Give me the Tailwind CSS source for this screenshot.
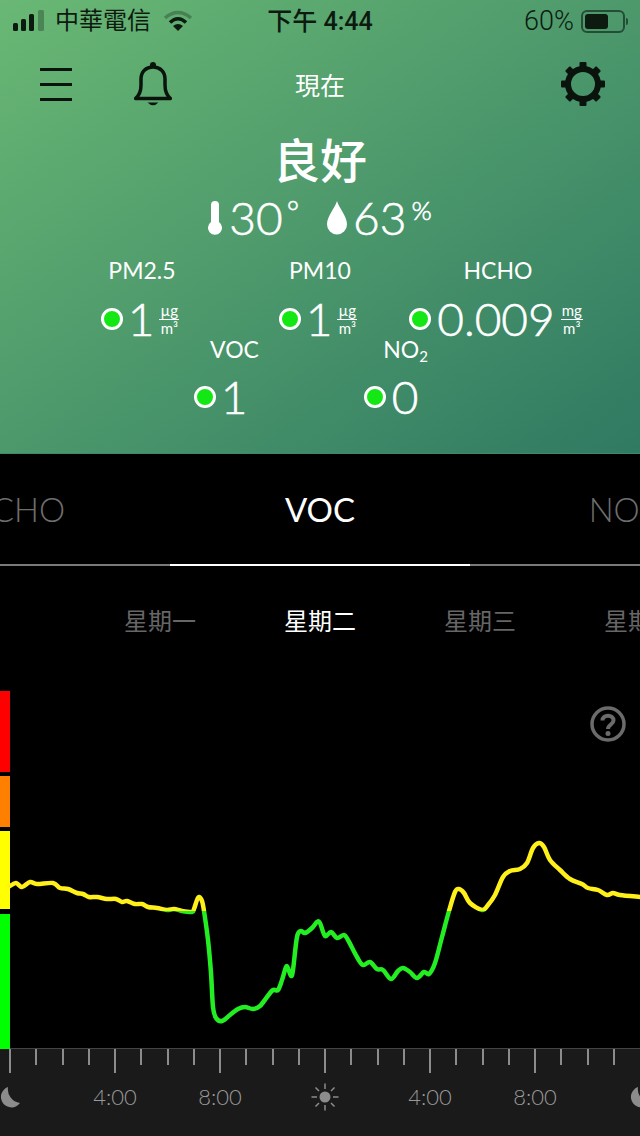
<!DOCTYPE html>
<html lang="zh-Hant">
<head>
  <meta charset="UTF-8" />
  <meta name="viewport" content="width=device-width, initial-scale=1.0">
  <title>VOC</title>
  <script src="https://cdn.jsdelivr.net/npm/@tailwindcss/browser@4"></script>
</head>
<body class="bg-black font-['Lato','Noto_Sans_CJK_TC',sans-serif]">
  <div class="w-[640px] h-[1136px] overflow-hidden flex flex-col">

    <!-- top panel -->
    <header class="h-[454px] shrink-0 bg-gradient-to-br from-[#6ab874] to-[#2f7a62] text-white border-b border-[#3d8a68]">
      <!-- status bar -->
      <div class="h-[42px] grid grid-cols-3 items-center text-[#0c1a10] font-['Roboto','Noto_Sans_CJK_TC',sans-serif] text-[24px]">
        <div class="flex items-center pl-[13px]">
          <svg width="33" height="24" viewBox="0 0 33 24" fill="currentColor">
            <rect x="0" y="14" width="5" height="8" rx="1.5"/>
            <rect x="8" y="10" width="5" height="12" rx="1.5"/>
            <rect x="16" y="5" width="5" height="17" rx="1.5"/>
            <rect x="25" y="1" width="6" height="21" rx="1.5" opacity=".3"/>
          </svg>
          <span class="ml-[9px] whitespace-nowrap leading-none">中華電信</span>
          <svg class="ml-[12px] shrink-0" width="30" height="24" viewBox="0 0 30 24" fill="none" stroke="currentColor" stroke-width="3.5">
            <path d="M2 9Q15 -2 28 9" opacity=".3"/>
            <path d="M7 13.5Q15 6 23 13.5"/>
            <path d="M15 22l-5-5q5-4 10 0z" fill="currentColor" stroke="none"/>
          </svg>
        </div>
        <div class="text-center text-[25px] font-medium whitespace-nowrap leading-none">下午 4:44</div>
        <div class="flex items-center justify-end pr-[15px]">
          <span class="mr-[7px] text-[27px] font-light leading-none">60%</span>
          <div class="relative w-[44px] h-[23px] rounded-[6px] border-2 border-[#0c1a10]/60 p-[2px]">
            <div class="w-[23px] h-full bg-[#0c1a10] rounded-[3px]"></div>
            <div class="absolute right-[-5px] top-[6px] w-[2px] h-[7px] bg-[#0c1a10]/60 rounded-r"></div>
          </div>
        </div>
      </div>

      <!-- nav row -->
      <div class="mt-[20px] h-[44px] grid grid-cols-3 items-center">
        <div class="flex items-center pl-[40px] gap-[62px]">
          <div class="w-[32px] flex flex-col gap-[12px]">
            <div class="h-[3px] bg-[#0a140c]"></div>
            <div class="h-[3px] bg-[#0a140c]"></div>
            <div class="h-[3px] bg-[#0a140c]"></div>
          </div>
          <svg width="38" height="44" viewBox="0 0 38 44" fill="none" stroke="#0a140c" stroke-width="3.5">
            <circle cx="19" cy="3" r="3" fill="#0a140c" stroke="none"/>
            <path d="M1.5 36.5Q7 32 7 23V17C7 9.5 12 5 19 5S31 9.5 31 17V23Q31 32 36.5 36.5Z" stroke-linejoin="round"/>
            <path d="M13.5 40.5H24.5Q19 46 13.5 40.5Z" fill="#0a140c" stroke="none"/>
          </svg>
        </div>
        <div class="text-center text-[25px] leading-none font-['Noto_Sans_CJK_TC',sans-serif] font-normal">現在</div>
        <div class="flex justify-end pr-[35px]">
          <svg width="44" height="44" viewBox="-22 -22 44 44" fill="#0a140c">
            <circle r="15" fill="none" stroke="#0a140c" stroke-width="6"/>
            <rect x="-3.5" y="-22" width="7" height="7" rx="1"/>
            <rect x="-3.5" y="-22" width="7" height="7" rx="1" transform="rotate(45)"/>
            <rect x="-3.5" y="-22" width="7" height="7" rx="1" transform="rotate(90)"/>
            <rect x="-3.5" y="-22" width="7" height="7" rx="1" transform="rotate(135)"/>
            <rect x="-3.5" y="-22" width="7" height="7" rx="1" transform="rotate(180)"/>
            <rect x="-3.5" y="-22" width="7" height="7" rx="1" transform="rotate(225)"/>
            <rect x="-3.5" y="-22" width="7" height="7" rx="1" transform="rotate(270)"/>
            <rect x="-3.5" y="-22" width="7" height="7" rx="1" transform="rotate(315)"/>
          </svg>
        </div>
      </div>

      <!-- status -->
      <div class="mt-[21px] h-[60px] flex items-center justify-center text-[47px] leading-none font-['Noto_Sans_CJK_TC',sans-serif] font-medium">良好</div>

      <!-- temperature / humidity -->
      <div class="mt-[9px] h-[44px] flex items-center justify-center text-[46px] leading-none font-light [-webkit-text-stroke:0.6px_white]">
        <svg width="14" height="34" viewBox="0 0 14 34" fill="#fff">
          <path d="M3 21V4a4 4 0 0 1 8 0V21a7 7 0 1 1-8 0Z"/>
        </svg>
        <span class="ml-[7px]">30</span>
        <span class="ml-[4px] mb-[16px] text-[30px]">°</span>
        <svg class="ml-[28px]" width="20" height="34" viewBox="0 0 20 34" fill="#fff">
          <path d="M10 0C12 7 20 15 20 23.5A10 10 0 0 1 0 23.5C0 15 8 7 10 0Z"/>
        </svg>
        <span class="ml-[6px]">63</span>
        <span class="ml-[5px] mb-[16px] text-[26px]">%</span>
      </div>

      <!-- metrics, first row -->
      <div class="mt-[18px] flex justify-center">
        <div class="w-[178px] flex flex-col items-center">
          <div class="h-[24px] text-[23px] leading-[24px]">PM2.5</div>
          <div class="mt-[14px] h-[46px] flex items-center pr-[4px]">
            <div class="w-[22px] h-[22px] rounded-full bg-[#14e814] border-[3px] border-white"></div>
            <span class="ml-[5px] text-[46px] leading-none font-light [-webkit-text-stroke:0.6px_white]">1</span>
            <div class="ml-[5px] w-[20px] flex flex-col items-center text-[15px] leading-[14px]"><span class="border-b border-white w-full text-center pb-[2px]">µg</span><span class="pt-[1px]">m³</span></div>
          </div>
        </div>
        <div class="w-[178px] flex flex-col items-center">
          <div class="h-[24px] text-[23px] leading-[24px]">PM10</div>
          <div class="mt-[14px] h-[46px] flex items-center pr-[4px]">
            <div class="w-[22px] h-[22px] rounded-full bg-[#14e814] border-[3px] border-white"></div>
            <span class="ml-[5px] text-[46px] leading-none font-light [-webkit-text-stroke:0.6px_white]">1</span>
            <div class="ml-[5px] w-[20px] flex flex-col items-center text-[15px] leading-[14px]"><span class="border-b border-white w-full text-center pb-[2px]">µg</span><span class="pt-[1px]">m³</span></div>
          </div>
        </div>
        <div class="w-[178px] flex flex-col items-center">
          <div class="h-[24px] text-[23px] leading-[24px]">HCHO</div>
          <div class="mt-[14px] h-[46px] flex items-center pr-[4px]">
            <div class="w-[22px] h-[22px] rounded-full bg-[#14e814] border-[3px] border-white"></div>
            <span class="ml-[6px] text-[46px] leading-none font-light [-webkit-text-stroke:0.6px_white]">0.009</span>
            <div class="ml-[6px] w-[22px] flex flex-col items-center text-[15px] leading-[14px]"><span class="border-b border-white w-full text-center pb-[2px]">mg</span><span class="pt-[1px]">m³</span></div>
          </div>
        </div>
      </div>

      <!-- metrics, second row -->
      <div class="-mt-[5px] flex justify-center">
        <div class="w-[171px] flex flex-col items-center">
          <div class="h-[24px] text-[23px] leading-[24px]">VOC</div>
          <div class="mt-[13px] h-[46px] flex items-center pr-[28px]">
            <div class="w-[22px] h-[22px] rounded-full bg-[#14e814] border-[3px] border-white"></div>
            <span class="ml-[5px] text-[46px] leading-none font-light [-webkit-text-stroke:0.6px_white]">1</span>
          </div>
        </div>
        <div class="w-[171px] flex flex-col items-center">
          <div class="h-[24px] text-[23px] leading-[24px]">NO<sub class="text-[15px]">2</sub></div>
          <div class="mt-[13px] h-[46px] flex items-center pr-[29px]">
            <div class="w-[22px] h-[22px] rounded-full bg-[#14e814] border-[3px] border-white"></div>
            <span class="ml-[6px] text-[46px] leading-none font-light [-webkit-text-stroke:0.6px_white]">0</span>
          </div>
        </div>
      </div>
    </header>

    <!-- pollutant tabs -->
    <nav class="h-[112px] shrink-0 flex justify-center overflow-hidden text-[33px]">
      <div class="w-[300px] shrink-0 pt-[2px] pr-[8px] flex items-center justify-center border-b-2 border-[#7a7a7a] text-[#6e6e6e] font-light">HCHO</div>
      <div class="w-[300px] shrink-0 pt-[2px] flex items-center justify-center border-b-2 border-white text-white">VOC</div>
      <div class="w-[300px] shrink-0 pt-[2px] pl-[4px] flex items-center justify-center border-b-2 border-[#7a7a7a] text-[#6e6e6e] font-light">NO<sub class="ml-[4px] text-[20px]">2</sub></div>
    </nav>

    <!-- days -->
    <div class="h-[112px] shrink-0 pb-[4px] pl-[80px] flex overflow-hidden text-[24px] font-normal text-[#666] font-['Noto_Sans_CJK_TC',sans-serif]">
      <div class="w-[160px] shrink-0 flex items-center justify-center">星期一</div>
      <div class="w-[160px] shrink-0 flex items-center justify-center text-white">星期二</div>
      <div class="w-[160px] shrink-0 flex items-center justify-center">星期三</div>
      <div class="w-[160px] shrink-0 flex items-center justify-center">星期四</div>
    </div>

    <!-- chart -->
    <div class="relative h-[370px] shrink-0">
      <div class="w-[10px] pt-[13px] flex flex-col">
        <div class="h-[81px] bg-[#ff0000]"></div>
        <div class="mt-[4px] h-[51px] bg-[#ff8000]"></div>
        <div class="mt-[4px] h-[78px] bg-[#ffff00]"></div>
        <div class="mt-[5px] h-[135px] bg-[#00ff00]"></div>
      </div>
      <svg class="absolute inset-0" width="640" height="370" viewBox="0 678 640 370" fill="none">
        <defs>
          <linearGradient id="level" gradientUnits="userSpaceOnUse" x1="0" y1="678" x2="0" y2="1048">
            <stop offset="0.631" stop-color="#fff01a"/>
            <stop offset="0.631" stop-color="#22ee22"/>
          </linearGradient>
        </defs>
        <path id="voc-line" stroke="url(#level)" stroke-width="4.5" stroke-linejoin="round" stroke-linecap="round"/>
      </svg>
      <svg class="absolute right-[14px] top-[28px]" width="36" height="36" viewBox="0 0 36 36" fill="none">
        <circle cx="18" cy="18" r="16" stroke="#6b6b6b" stroke-width="3.5"/>
        <path d="M12.5 14.5C12.5 8 23.5 8 23.5 14.5C23.5 18.5 18 18.5 18 23" stroke="#6b6b6b" stroke-width="4"/>
        <circle cx="18" cy="27.5" r="2.5" fill="#6b6b6b"/>
      </svg>
    </div>

    <!-- time axis -->
    <footer class="flex-1 bg-[#1a1a1a] border-t border-[#444]">
      <div class="flex pl-[9px] items-start">
        <div class="w-[26.25px] shrink-0 h-[24px] border-l-2 border-[#8c8c8c]"></div><div class="w-[26.25px] shrink-0 h-[16px] border-l-2 border-[#8c8c8c]"></div><div class="w-[26.25px] shrink-0 h-[16px] border-l-2 border-[#8c8c8c]"></div><div class="w-[26.25px] shrink-0 h-[16px] border-l-2 border-[#8c8c8c]"></div>
        <div class="w-[26.25px] shrink-0 h-[24px] border-l-2 border-[#8c8c8c]"></div><div class="w-[26.25px] shrink-0 h-[16px] border-l-2 border-[#8c8c8c]"></div><div class="w-[26.25px] shrink-0 h-[16px] border-l-2 border-[#8c8c8c]"></div><div class="w-[26.25px] shrink-0 h-[16px] border-l-2 border-[#8c8c8c]"></div>
        <div class="w-[26.25px] shrink-0 h-[24px] border-l-2 border-[#8c8c8c]"></div><div class="w-[26.25px] shrink-0 h-[16px] border-l-2 border-[#8c8c8c]"></div><div class="w-[26.25px] shrink-0 h-[16px] border-l-2 border-[#8c8c8c]"></div><div class="w-[26.25px] shrink-0 h-[16px] border-l-2 border-[#8c8c8c]"></div>
        <div class="w-[26.25px] shrink-0 h-[24px] border-l-2 border-[#8c8c8c]"></div><div class="w-[26.25px] shrink-0 h-[16px] border-l-2 border-[#8c8c8c]"></div><div class="w-[26.25px] shrink-0 h-[16px] border-l-2 border-[#8c8c8c]"></div><div class="w-[26.25px] shrink-0 h-[16px] border-l-2 border-[#8c8c8c]"></div>
        <div class="w-[26.25px] shrink-0 h-[24px] border-l-2 border-[#8c8c8c]"></div><div class="w-[26.25px] shrink-0 h-[16px] border-l-2 border-[#8c8c8c]"></div><div class="w-[26.25px] shrink-0 h-[16px] border-l-2 border-[#8c8c8c]"></div><div class="w-[26.25px] shrink-0 h-[16px] border-l-2 border-[#8c8c8c]"></div>
        <div class="w-[26.25px] shrink-0 h-[24px] border-l-2 border-[#8c8c8c]"></div><div class="w-[26.25px] shrink-0 h-[16px] border-l-2 border-[#8c8c8c]"></div><div class="w-[26.25px] shrink-0 h-[16px] border-l-2 border-[#8c8c8c]"></div><div class="w-[26.25px] shrink-0 h-[16px] border-l-2 border-[#8c8c8c]"></div>
      </div>
      <div class="mt-[12px] -ml-[42.5px] flex text-[22px] leading-none font-light text-[#999]">
        <div class="w-[105px] h-[24px] shrink-0 flex items-center justify-center">
          <svg width="20" height="21" viewBox="0 0 20 21" fill="#8c8c8c"><path d="M8 0A10.5 10.5 0 1 0 20 16A14 14 0 0 1 8 0Z"/></svg>
        </div>
        <div class="w-[105px] h-[24px] shrink-0 flex items-center justify-center">4:00</div>
        <div class="w-[105px] h-[24px] shrink-0 flex items-center justify-center">8:00</div>
        <div class="w-[105px] h-[24px] shrink-0 flex items-center justify-center">
          <svg width="28" height="28" viewBox="-14 -14 28 28" stroke="#8c8c8c" stroke-width="1.5" fill="#8c8c8c">
            <circle r="5.5" stroke="none"/>
            <path d="M0-13.5V-8M0 8V13.5M-13.5 0H-8M8 0H13.5M-9.5-9.5L-6-6M6 6L9.5 9.5M9.5-9.5L6-6M-6 6L-9.5 9.5"/>
          </svg>
        </div>
        <div class="w-[105px] h-[24px] shrink-0 flex items-center justify-center">4:00</div>
        <div class="w-[105px] h-[24px] shrink-0 flex items-center justify-center">8:00</div>
        <div class="w-[105px] h-[24px] shrink-0 flex items-center justify-center">
          <svg width="20" height="21" viewBox="0 0 20 21" fill="#8c8c8c"><path d="M8 0A10.5 10.5 0 1 0 20 16A14 14 0 0 1 8 0Z"/></svg>
        </div>
      </div>
    </footer>
  </div>

  <script>
    // VOC readings traced across the day, smoothed with a Catmull-Rom spline
    const pts = [[10,886],[16,883],[22,887],[30,882],[37,884],[53,883],[60,888],[68,889],[77,893],[83,894],[89,897],[97,897],[107,899],[116,899],[122,902],[127,901],[135,904],[142,904],[148,907],[157,908],[167,910],[174,909],[182,911],[192,912],[194,909],[197,900],[199,897],[202,901],[204,911],[208,940],[211,973],[213,1007],[216,1018],[222,1021],[230,1015],[238,1009],[245,1007],[253,1009],[260,1006],[267,997],[273,990],[278,990],[282,980],[286,967],[288,968],[291,976],[293,970],[297,937],[301,931],[305,933],[312,928],[317,922],[320,923],[325,936],[331,932],[337,938],[344,935],[348,940],[357,957],[363,965],[370,962],[377,969],[383,970],[391,979],[398,971],[403,968],[410,972],[417,978],[424,972],[429,974],[435,963],[442,937],[449,911],[455,892],[459,889],[464,893],[470,903],[482,910],[488,905],[495,895],[503,877],[510,871],[520,869],[527,863],[533,848],[539,843],[544,847],[550,860],[560,870],[570,879],[582,884],[588,888],[598,890],[607,895],[613,893],[620,895],[640,897]];
    let d = `M${pts[0][0]} ${pts[0][1]}`;
    for (let i = 0; i < pts.length - 1; i++) {
      const p0 = pts[i - 1] || pts[i], p1 = pts[i], p2 = pts[i + 1], p3 = pts[i + 2] || p2;
      d += `C${p1[0] + (p2[0] - p0[0]) / 6} ${p1[1] + (p2[1] - p0[1]) / 6} ${p2[0] - (p3[0] - p1[0]) / 6} ${p2[1] - (p3[1] - p1[1]) / 6} ${p2[0]} ${p2[1]}`;
    }
    document.getElementById("voc-line").setAttribute("d", d);
  </script>
</body>
</html>
